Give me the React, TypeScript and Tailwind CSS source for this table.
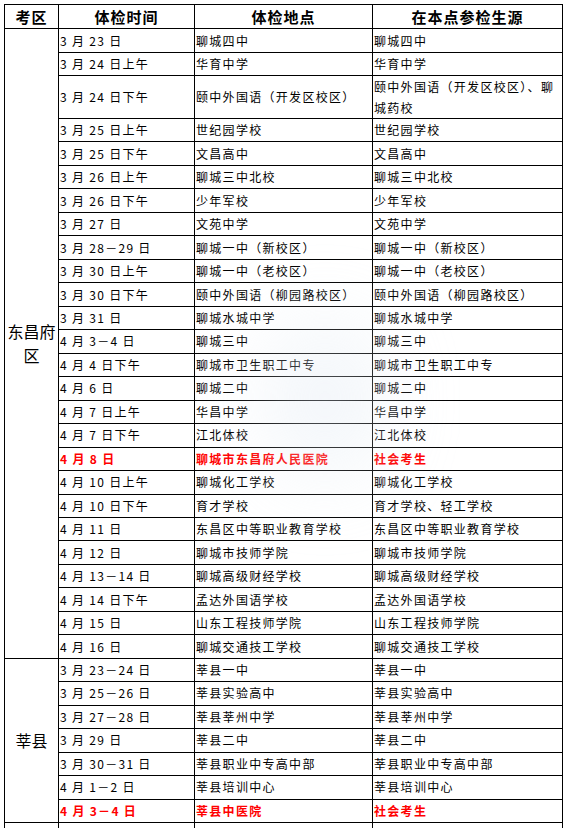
type Row = { date: string; place: string; source: string; red?: boolean; tall?: boolean };

const dongchangfu: Row[] = [
  { date: '3 月 23 日', place: '聊城四中', source: '聊城四中' },
  { date: '3 月 24 日上午', place: '华育中学', source: '华育中学' },
  { date: '3 月 24 日下午', place: '颐中外国语（开发区校区）', source: '颐中外国语（开发区校区）、聊|城药校', tall: true },
  { date: '3 月 25 日上午', place: '世纪园学校', source: '世纪园学校' },
  { date: '3 月 25 日下午', place: '文昌高中', source: '文昌高中' },
  { date: '3 月 26 日上午', place: '聊城三中北校', source: '聊城三中北校' },
  { date: '3 月 26 日下午', place: '少年军校', source: '少年军校' },
  { date: '3 月 27 日', place: '文苑中学', source: '文苑中学' },
  { date: '3 月 28－29 日', place: '聊城一中（新校区）', source: '聊城一中（新校区）' },
  { date: '3 月 30 日上午', place: '聊城一中（老校区）', source: '聊城一中（老校区）' },
  { date: '3 月 30 日下午', place: '颐中外国语（柳园路校区）', source: '颐中外国语（柳园路校区）' },
  { date: '3 月 31 日', place: '聊城水城中学', source: '聊城水城中学' },
  { date: '4 月 3－4 日', place: '聊城三中', source: '聊城三中' },
  { date: '4 月 4 日下午', place: '聊城市卫生职工中专', source: '聊城市卫生职工中专' },
  { date: '4 月 6 日', place: '聊城二中', source: '聊城二中' },
  { date: '4 月 7 日上午', place: '华昌中学', source: '华昌中学' },
  { date: '4 月 7 日下午', place: '江北体校', source: '江北体校' },
  { date: '4 月 8 日', place: '聊城市东昌府人民医院', source: '社会考生', red: true },
  { date: '4 月 10 日上午', place: '聊城化工学校', source: '聊城化工学校' },
  { date: '4 月 10 日下午', place: '育才学校', source: '育才学校、轻工学校' },
  { date: '4 月 11 日', place: '东昌区中等职业教育学校', source: '东昌区中等职业教育学校' },
  { date: '4 月 12 日', place: '聊城市技师学院', source: '聊城市技师学院' },
  { date: '4 月 13－14 日', place: '聊城高级财经学校', source: '聊城高级财经学校' },
  { date: '4 月 14 日下午', place: '孟达外国语学校', source: '孟达外国语学校' },
  { date: '4 月 15 日', place: '山东工程技师学院', source: '山东工程技师学院' },
  { date: '4 月 16 日', place: '聊城交通技工学校', source: '聊城交通技工学校' },
];

const shenxian: Row[] = [
  { date: '3 月 23－24 日', place: '莘县一中', source: '莘县一中' },
  { date: '3 月 25－26 日', place: '莘县实验高中', source: '莘县实验高中' },
  { date: '3 月 27－28 日', place: '莘县莘州中学', source: '莘县莘州中学' },
  { date: '3 月 29 日', place: '莘县二中', source: '莘县二中' },
  { date: '3 月 30－31 日', place: '莘县职业中专高中部', source: '莘县职业中专高中部' },
  { date: '4 月 1－2 日', place: '莘县培训中心', source: '莘县培训中心' },
  { date: '4 月 3－4 日', place: '莘县中医院', source: '社会考生', red: true },
];

const cell = 'border border-black px-[1px] align-middle text-left whitespace-nowrap';
const head = 'border border-black text-center align-middle text-[15px] font-bold tracking-[1px]';

function rowHeight(i: number, r: Row, first: boolean) {
  if (r.tall) return 'h-[43px]';
  if (first && i === 0) return 'h-[24px]';
  if (first && i === 1) return 'h-[23px]';
  return 'h-[23.47px]';
}

// a "|" in the text marks where the original line wraps
function Lines({ text }: { text: string }) {
  const parts = text.split('|');
  if (parts.length === 1) return <>{text}</>;
  return (
    <>
      {parts.map((p, i) => (
        <span key={i} className="block leading-[21px]">
          {p}
        </span>
      ))}
    </>
  );
}

function Group({ name, lines, rows, first }: { name: string; lines: string[]; rows: Row[]; first: boolean }) {
  return (
    <>
      {rows.map((r, i) => {
        const tone = r.red ? 'text-[#ff0000] font-bold' : 'text-black';
        return (
          <tr key={name + i} className={rowHeight(i, r, first)}>
            {i === 0 && (
              <td
                rowSpan={rows.length}
                className="border border-black p-0 text-center align-middle text-[16px] leading-[24px] tracking-normal"
              >
                {lines.map((l) => (
                  <span key={l} className="block">
                    {l}
                  </span>
                ))}
              </td>
            )}
            <td className={`${cell} ${tone}`}>{r.date}</td>
            <td className={`${cell} ${tone}`}>{r.place}</td>
            <td className={`${cell} ${tone}`}>
              <Lines text={r.source} />
            </td>
          </tr>
        );
      })}
    </>
  );
}

export default function App() {
  return (
    <div className="relative h-[828px] w-[566px] overflow-hidden bg-white pl-[4px] pt-[4px] font-['Noto_Sans_CJK_SC','Noto_Sans',sans-serif]">
      <table className="table-fixed border-collapse text-[12px] tracking-[1.3px] leading-[16px] text-black w-[558px]">
        <colgroup>
          <col className="w-[54px]" />
          <col className="w-[136px]" />
          <col className="w-[178px]" />
          <col className="w-[190px]" />
        </colgroup>
        <thead>
          <tr className="h-[24px]">
            <th className={head}>考区</th>
            <th className={head}>体检时间</th>
            <th className={head}>体检地点</th>
            <th className={head}>在本点参检生源</th>
          </tr>
        </thead>
        <tbody>
          <Group name="东昌府区" lines={['东昌府', '区']} rows={dongchangfu} first />
          <Group name="莘县" lines={['莘县']} rows={shenxian} first={false} />
          <tr className="h-[23.47px]">
            <td className="border border-black p-0 text-center align-top text-[16px] leading-[20px] tracking-normal">
              <span className="block pt-[3px]">茌平</span>
            </td>
            <td className={cell}></td>
            <td className={cell}></td>
            <td className={cell}></td>
          </tr>
        </tbody>
      </table>
      <div className="pointer-events-none absolute left-[270px] top-[320px] h-[160px] w-[110px] rounded-full bg-[#dfe8f2] opacity-40 blur-2xl" />
    </div>
  );
}
